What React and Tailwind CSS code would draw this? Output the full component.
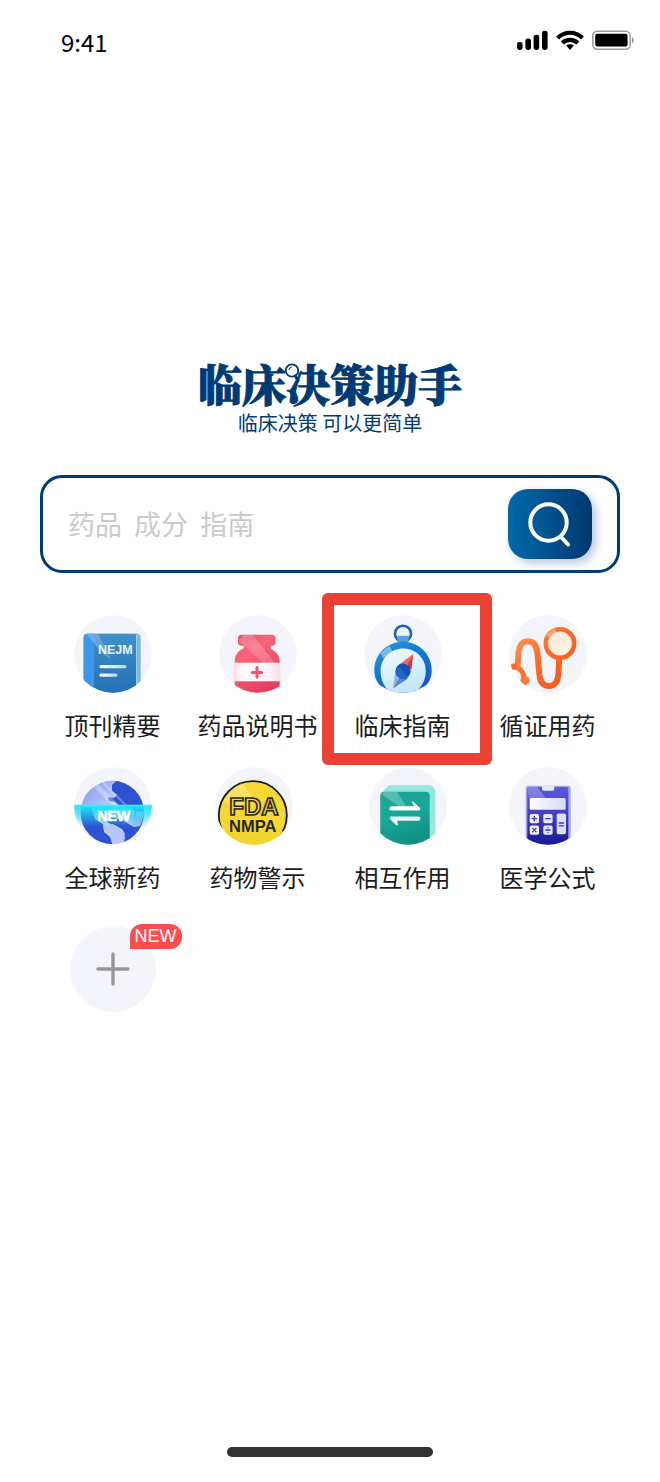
import React, { useState } from "react";

const StatusIcons = () => (
  <div className="flex items-center gap-2">
    <svg width="31" height="20" viewBox="0 0 31 20" aria-hidden="true">
      <rect x="0" y="12" width="5.6" height="8" rx="2.4" />
      <rect x="8.4" y="8.6" width="5.6" height="11.4" rx="2.4" />
      <rect x="16.6" y="4.8" width="5.6" height="15.2" rx="2.4" />
      <rect x="25" y="0.8" width="5.6" height="19.2" rx="2.4" />
    </svg>
    <svg width="28" height="20" viewBox="0 0 28 20" aria-hidden="true">
      <g fill="none" stroke="#000" strokeWidth="4.2">
        <path d="M1.6 8C8.6 1 19.4 1 26.4 8" />
        <path d="M6.2 13C10.6 8.8 17.4 8.8 21.8 13" />
      </g>
      <path d="M10.2 15.6c2.2-1.8 5.4-1.8 7.6 0L14 20z" />
    </svg>
    <svg width="43" height="20" viewBox="0 0 43 20" aria-hidden="true">
      <rect
        x="0.8"
        y="1.2"
        width="37.4"
        height="18"
        rx="4.5"
        fill="none"
        stroke="#9b9b9b"
        strokeWidth="1.5"
      />
      <rect x="3.2" y="3.8" width="32.4" height="12.8" rx="2" />
      <path d="M40 7.2c2.6 1 2.6 5 0 6z" fill="#9b9b9b" />
    </svg>
  </div>
);

// Every app icon sits on the same pale disc, and the drawing is cut off by it
const Disc = ({ id, shift = 0, children }) => (
  <svg width="90" height="78" viewBox="0 0 90 78" aria-hidden="true">
    <defs>
      <clipPath id={`${id}-clip`}>
        <circle cx="39" cy="39" r="38.8" />
      </clipPath>
    </defs>
    <g transform={`translate(${6 + shift} 0)`}>
      <circle cx="39" cy="39" r="38.8" fill="#f3f5fa" />
      <g clipPath={`url(#${id}-clip)`}>{children}</g>
    </g>
  </svg>
);

const JournalIcon = () => (
  <Disc id="journal">
    <defs>
      <linearGradient id="journal-a" x1="0" y1="0" x2="0" y2="1">
        <stop offset="0" stopColor="#4090cb" />
        <stop offset="1" stopColor="#2270b4" />
      </linearGradient>
      <linearGradient id="journal-b" x1="0" y1="0" x2="1" y2="0">
        <stop offset="0" stopColor="#fff" />
        <stop offset="1" stopColor="#b9d8f2" />
      </linearGradient>
    </defs>
    <rect x="9.7" y="18.7" width="57" height="64" rx="4" fill="#7ab8ea" />
    <path d="M13.7 18.7H62.5V80H9.7V22.7a4 4 0 0 1 4-4z" fill="url(#journal-a)" />
    <path d="M13.7 18.7H20V80H9.7V22.7a4 4 0 0 1 4-4z" fill="#3c97ec" />
    <path d="M12 18.7h12L37 44 30 40z" fill="#fff" opacity="0.22" />
    <path d="M62.5 20V80" stroke="#b8dcf6" strokeWidth="0.8" />
    <text
      x="24"
      y="39"
      fontSize="12.5"
      fontWeight="700"
      fill="#eef7ff"
      fontFamily="Liberation Sans, sans-serif"
    >
      NEJM
    </text>
    <rect x="25.4" y="50" width="27" height="3.2" rx="1.6" fill="url(#journal-b)" />
    <rect x="25.4" y="58.6" width="18" height="3.2" rx="1.6" fill="url(#journal-b)" />
  </Disc>
);

const BottleIcon = () => (
  <Disc id="bottle">
    <defs>
      <linearGradient id="bottle-a" x1="0" y1="0" x2="0.6" y2="1">
        <stop offset="0" stopColor="#e64866" />
        <stop offset="0.4" stopColor="#f9647c" />
        <stop offset="1" stopColor="#e43a5e" />
      </linearGradient>
      <linearGradient id="bottle-b" x1="0" y1="0" x2="1" y2="0">
        <stop offset="0" stopColor="#fde4e9" />
        <stop offset="0.25" stopColor="#fff" />
        <stop offset="0.8" stopColor="#fff2f4" />
        <stop offset="1" stopColor="#fbdbe2" />
      </linearGradient>
      <clipPath id="bottle-c">
        <path d="M22.5 19.7h30.600a3.500 3.500 0 0 1 3.500 3.500v4a3.500 3.500 0 0 1-3.500 3.500h-1.400v3c5.400 2.600 9 6.600 9 13.400V80h-45V46.700c0-6.800 3.600-10.800 9-13.400v-2.600h-2.200a3.500 3.500 0 0 1-3.500-3.500v-4a3.500 3.500 0 0 1 3.500-3.500z" />
      </clipPath>
    </defs>
    <g clipPath="url(#bottle-c)">
      <rect x="10" y="15" width="58" height="65" fill="url(#bottle-a)" />
      <path d="M25 18h7l24 30H44L20 26z" fill="#fff" opacity="0.2" />
    </g>
    <rect x="15.3" y="47.7" width="46" height="18.600" fill="url(#bottle-b)" />
    <path
      d="M38 52.600v9.600M33.200 57.400h9.600"
      stroke="#ef5472"
      strokeWidth="3"
      strokeLinecap="round"
    />
  </Disc>
);

const CompassIcon = () => (
  <Disc id="compass">
    <defs>
      <linearGradient id="compass-a" x1="0.2" y1="0" x2="0.8" y2="1">
        <stop offset="0" stopColor="#2496dc" />
        <stop offset="0.5" stopColor="#0f74cf" />
        <stop offset="1" stopColor="#124fc4" />
      </linearGradient>
      <linearGradient id="compass-b" x1="0" y1="0" x2="0.4" y2="1">
        <stop offset="0" stopColor="#f7fbff" />
        <stop offset="1" stopColor="#c3e6f8" />
      </linearGradient>
    </defs>
    <circle cx="39" cy="18.7" r="8" fill="#f2f9fe" stroke="#1561d0" strokeWidth="2.600" />
    <path d="M33.400 20.700h11.300v6H33.400z" fill="#5aa3dc" />
    <path
      d="M39 26.800C55 26.800 67.700 39.500 67.700 55.400C67.700 60 66.500 64 64 68L60 80H18L14 68C11.500 64 10.300 60 10.300 55.400C10.300 39.500 23 26.800 39 26.800z"
      fill="url(#compass-a)"
    />
    <path d="M16 38l9-7 4 6-9 7z" fill="#fff" opacity="0.4" />
    <path
      d="M39.200 33.400C52 33.400 61.800 43.500 61.800 56C61.800 63.500 59 69.500 54 75L52 80H27L24 75C19 69.500 16.600 63.500 16.600 56C16.600 43.500 26.500 33.400 39.200 33.400z"
      fill="url(#compass-b)"
    />
    <path d="M49.200 39L34 50.500l6 5.500z" fill="#f06a5c" />
    <path d="M49.200 39L40 56l7.500-2z" fill="#d93238" />
    <path d="M29 73.500L31.200 57.500 39 56z" fill="#8cb2e4" />
    <path d="M29 73.500L39 56l5 7.500z" fill="#5d83cc" />
    <circle cx="39" cy="56.200" r="7.600" fill="#1551bb" />
    <path d="M33.600 51a7.600 7.600 0 0 0 10.800 10.600z" fill="#2366c9" />
  </Disc>
);

const StethoscopeIcon = () => (
  <Disc id="steth">
    <defs>
      <linearGradient id="steth-a" gradientUnits="userSpaceOnUse" x1="2" y1="20" x2="60" y2="70">
        <stop offset="0" stopColor="#ff9a5c" />
        <stop offset="0.5" stopColor="#fb6a2a" />
        <stop offset="1" stopColor="#f75a18" />
      </linearGradient>
      <linearGradient id="steth-b" x1="0" y1="0" x2="1" y2="1">
        <stop offset="0" stopColor="#ffe6cf" />
        <stop offset="1" stopColor="#fff6ec" />
      </linearGradient>
    </defs>
    <g fill="none" stroke="url(#steth-a)" strokeLinecap="round">
      <path
        d="M50.300 43L49.300 60C48.800 67 45.500 71 40 71C34.500 71 31.200 67 30.400 60L28.400 38C27.600 30.500 24.500 26.200 19 26.200C13.500 26.200 10.200 30.500 9.600 37L8.600 51"
        strokeWidth="6"
      />
      <path d="M4.500 52C11 52 15 57 15.200 65" strokeWidth="5" />
    </g>
    <circle cx="4.800" cy="51.600" r="3.200" fill="#fb6a2a" />
    <circle cx="16" cy="65.600" r="4.600" fill="#fb7a3e" />
    <circle
      cx="51"
      cy="28.500"
      r="14.200"
      fill="url(#steth-b)"
      stroke="url(#steth-a)"
      strokeWidth="4.600"
    />
    <path d="M37 20l8-6.500 3 4-7 6z" fill="#fff" opacity="0.35" />
  </Disc>
);

const GlobeIcon = () => (
  <Disc id="globe">
    <defs>
      <linearGradient id="globe-a" x1="0" y1="0" x2="1" y2="1">
        <stop offset="0" stopColor="#7c95ee" />
        <stop offset="0.5" stopColor="#c6d4fc" />
        <stop offset="1" stopColor="#a3b6f6" />
      </linearGradient>
      <linearGradient id="globe-b" x1="0" y1="0" x2="0" y2="1">
        <stop offset="0" stopColor="#19e6f8" />
        <stop offset="0.5" stopColor="#1fdcf5" stopOpacity="0.6" />
        <stop offset="1" stopColor="#35d0f8" stopOpacity="0" />
      </linearGradient>
      <clipPath id="globe-c">
        <circle cx="38.300" cy="45.500" r="31.700" />
      </clipPath>
    </defs>
    <g clipPath="url(#globe-c)">
      <rect x="6" y="13" width="66" height="66" fill="url(#globe-a)" />
      <path
        d="M38 18l5-5h14l16 18v24l-6 5-8-8 2-8-7-6-8 2-5-5-6-1-1-4 6 1 3-3-5-4z"
        fill="#2f52d2"
      />
      <path d="M5 40h12l4 12 8 5 1 8 6 5 3 9H24L8 62z" fill="#2f52d2" />
      <path d="M49 79l2-8-1-6-9-6-8-4 3-5 12 3 12 7 12-4v14l-12 10z" fill="#2f52d2" />
      <path d="M29 60l10-3 9 5 3 5-3 5-4 7-5-2-2-9-6-4z" fill="#b7c6fa" />
      <path d="M57 50l6-6 8 1-5 14-6 1z" fill="#9fb7f8" />
      <path d="M15 15h7l26 26h-7zM25 13h3l28 28h-3z" fill="#fff" opacity="0.3" />
    </g>
    <path d="M0 38h78v22H0z" fill="url(#globe-b)" />
    <path d="M0 38.600h78" stroke="#2af3fc" strokeWidth="1.600" />
    <text
      x="23.500"
      y="54"
      fontSize="14"
      fontWeight="700"
      fill="#fff"
      stroke="#fff"
      strokeWidth="0.500"
      fontFamily="Liberation Sans, sans-serif"
    >
      NEW
    </text>
  </Disc>
);

const WarningIcon = () => (
  <Disc id="warn" shift={-4}>
    <circle cx="37.800" cy="48.200" r="34" fill="#f5d835" stroke="#161410" strokeWidth="1.800" />
    <path d="M9 34C13 24 19 19 27 15.500L38 32 24 41z" fill="#fff" opacity="0.25" />
    <path d="M4 70L13 60c14 9 36 9 50 0l10 10v10H4z" fill="#f3d52f" />
    <g fontFamily="Liberation Sans, sans-serif" fontWeight="700" fill="#2a2618">
      <text x="14.300" y="48" fontSize="24" fill="#f5d835" stroke="#2a2618" strokeWidth="1.600">
        FDA
      </text>
      <text x="14" y="65.300" fontSize="16.500">
        NMPA
      </text>
    </g>
  </Disc>
);

const InteractionIcon = () => (
  <Disc id="inter" shift={5}>
    <defs>
      <linearGradient id="inter-a" x1="0" y1="0" x2="0.3" y2="1">
        <stop offset="0" stopColor="#20a596" />
        <stop offset="0.5" stopColor="#17a899" />
        <stop offset="1" stopColor="#129084" />
      </linearGradient>
    </defs>
    <path d="M20 18.300h40a6.300 6.300 0 0 1 6.300 6.300V80h-55V27z" fill="#93e7dc" />
    <path d="M15.300 24.700h41.400a4 4 0 0 1 4 4V80H11.300V28.700a4 4 0 0 1 4-4z" fill="url(#inter-a)" />
    <path d="M12 27l3-2h13l11 17-8-2z" fill="#fff" opacity="0.25" />
    <path
      d="M22.500 39.300H45L43 35.600Q43 33.800 44.800 35L51 41Q52 43.500 49.500 43.500H22.500A2.100 2.100 0 0 1 22.500 39.300z"
      fill="#fff"
    />
    <path
      d="M49.300 49.500H22.500Q20 49.800 21 52L27 58Q28.800 59 28.900 57.400L28.200 53.700H49.300A2.100 2.100 0 0 0 49.300 49.500z"
      fill="#eafaf8"
    />
  </Disc>
);

const CalculatorIcon = () => (
  <Disc id="calc">
    <defs>
      <linearGradient id="calc-a" x1="0" y1="0" x2="0" y2="1">
        <stop offset="0" stopColor="#5a5ad8" />
        <stop offset="0.5" stopColor="#3c3cc2" />
        <stop offset="1" stopColor="#14148e" />
      </linearGradient>
      <linearGradient id="calc-b" x1="0" y1="0" x2="1" y2="0">
        <stop offset="0" stopColor="#fff" />
        <stop offset="1" stopColor="#d8d9fa" />
      </linearGradient>
    </defs>
    <rect x="16.700" y="18.700" width="45" height="64" rx="3" fill="#a3a5f2" />
    <rect x="18.300" y="20" width="41" height="62" rx="2" fill="url(#calc-a)" />
    <path d="M18.300 20h10l9 12H20z" fill="#fff" opacity="0.25" />
    <path d="M33 18.700h12.300v2.800a2.200 2.200 0 0 1-2.200 2.200h-7.900a2.200 2.200 0 0 1-2.200-2.200z" fill="#e9eafd" />
    <rect x="20.700" y="31" width="36" height="11.700" rx="1.500" fill="url(#calc-b)" />
    <rect x="20.700" y="47" width="9.300" height="9.300" rx="1.800" fill="#f1f1fe" />
    <rect x="34.300" y="47" width="9.300" height="9.300" rx="1.800" fill="#e6e7fc" />
    <rect x="20.700" y="58.400" width="9.300" height="9.300" rx="1.800" fill="#f1f1fe" />
    <rect x="34.300" y="58.400" width="9.300" height="9.300" rx="1.800" fill="#e6e7fc" />
    <rect x="47.700" y="46.500" width="9.300" height="20.700" rx="1.800" fill="#dddffb" />
    <g stroke="#3a3aba" strokeWidth="1.300" strokeLinecap="round">
      <path d="M25.350 49.400v4.500M23.100 51.650h4.500M36.700 51.650h4.500" />
      <path d="M23.700 61.400l3.300 3.300M27 61.400l-3.300 3.300M36.700 63h4.500M50.200 56h4.300M50.200 58.800h4.300" />
      <path d="M39 60.600v0.100M39 65.400v0.100" />
    </g>
  </Disc>
);

const apps = [
  { name: "顶刊精要", Icon: JournalIcon },
  { name: "药品说明书", Icon: BottleIcon },
  { name: "临床指南", Icon: CompassIcon, marked: true },
  { name: "循证用药", Icon: StethoscopeIcon },
  { name: "全球新药", Icon: GlobeIcon },
  { name: "药物警示", Icon: WarningIcon },
  { name: "相互作用", Icon: InteractionIcon },
  { name: "医学公式", Icon: CalculatorIcon },
];

const Logo = () => (
  <div className="flex flex-col items-center text-[#003a74]">
    <h1 className="relative text-[44px] leading-[44px] font-black whitespace-nowrap [-webkit-text-stroke:1px_#003a74] font-['Noto_Serif_CJK_SC','Noto_Sans_CJK_SC',serif]">
      临床决策助手
      <svg
        className="absolute top-0 left-[85px]"
        width="20"
        height="24"
        viewBox="0 0 20 24"
        aria-hidden="true"
      >
        <path d="M4 3H15V19H4z" fill="#fff" />
        <circle cx="9" cy="9.500" r="6.200" fill="#fff" stroke="#003a74" strokeWidth="1.800" />
        <path d="M5.800 9a3.400 3.400 0 0 1 3-3" fill="none" stroke="#003a74" strokeWidth="1" />
        <path d="M12.500 15l2.500 4.500" stroke="#003a74" strokeWidth="3.200" strokeLinecap="round" />
      </svg>
    </h1>
    <p className="mt-1.5 text-[20px] leading-6">临床决策 可以更简单</p>
  </div>
);

const App = () => {
  const [keyword, setKeyword] = useState("");

  return (
    <div className="flex min-h-screen flex-col bg-white font-['Noto_Sans_CJK_SC',sans-serif] text-[#1c1c1c]">
      <header className="flex items-start justify-between pt-[30px] pr-[25px] pl-[61px] text-black">
        <span className="h-7 text-[24px] leading-6">9:41</span>
        <StatusIcons />
      </header>

      <main className="flex-1 px-10 pt-[303px]">
        <Logo />

        <form
          onSubmit={(e) => e.preventDefault()}
          className="mt-10 flex h-[98px] items-center rounded-[22px] border-3 border-[#003a74] px-[25px]"
        >
          <input
            type="text"
            aria-label="搜索"
            placeholder="药品  成分  指南"
            value={keyword}
            onChange={(e) => setKeyword(e.target.value)}
            className="min-w-0 flex-1 bg-transparent text-[27px] leading-10 outline-none placeholder:text-[#cbcbcb]"
          />
          <button
            type="submit"
            aria-label="搜索"
            className="flex h-[70px] w-[84px] items-center justify-center rounded-[20px] bg-linear-to-r from-[#006aa9] to-[#003870] shadow-[4px_4px_10px_#b9c6de]"
          >
            <svg width="44" height="46" viewBox="0 0 44 46" fill="none" aria-hidden="true">
              <circle cx="20.500" cy="21.500" r="18.200" stroke="#fff" strokeWidth="4" />
              <path d="M33.500 36.500l6.500 7" stroke="#fff" strokeWidth="4" strokeLinecap="round" />
            </svg>
          </button>
        </form>

        <nav className="mt-[42px] grid grid-cols-4 gap-y-6">
          {apps.map(({ name, Icon, marked }) => (
            <a key={name} href="#" className="relative flex flex-col items-center">
              <Icon />
              <span className="mt-3.5 text-2xl leading-9 whitespace-nowrap">{name}</span>
              {marked && (
                <span className="pointer-events-none absolute -top-[22px] -right-[17px] -bottom-[22px] -left-2 rounded-md border-12 border-[#ea4335]" />
              )}
            </a>
          ))}
        </nav>

        <div className="mt-[31px] grid grid-cols-4 justify-items-center">
          <button
            type="button"
            aria-label="添加"
            className="relative flex size-[86px] items-center justify-center rounded-full bg-[#f3f5fa]"
          >
            <svg width="34" height="34" viewBox="0 0 34 34" aria-hidden="true">
              <path
                d="M17 2v30M2 17h30"
                stroke="#979797"
                strokeWidth="3.400"
                strokeLinecap="round"
              />
            </svg>
            <span className="absolute -top-0.5 left-[60px] rounded-xl rounded-bl-none bg-[#ff4d4f] px-[5px] font-['Liberation_Sans',sans-serif] text-[18px] leading-[25px] text-white">
              NEW
            </span>
          </button>
        </div>
      </main>

      <footer className="flex justify-center pb-[25px]">
        <div className="h-2.5 w-[206px] rounded-full bg-[#333333]" />
      </footer>
    </div>
  );
};

export default App;
